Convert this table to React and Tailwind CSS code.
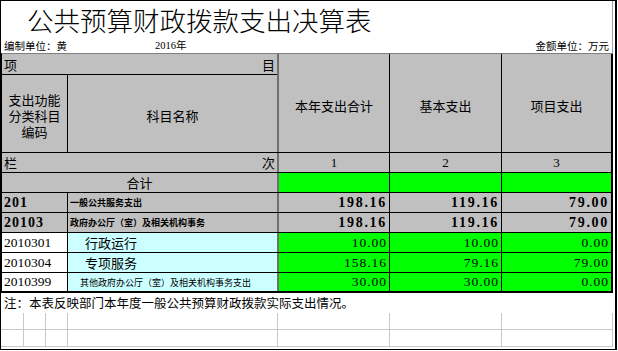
const NUM = "font-['Liberation_Serif','Noto_Sans_CJK_SC',serif]";

const rows = [
  { code: '201', name: '一般公共服务支出', vals: ['198.16', '119.16', '79.00'], sum: true },
  { code: '20103', name: '政府办公厅（室）及相关机构事务', vals: ['198.16', '119.16', '79.00'], sum: true },
  { code: '2010301', name: '行政运行', vals: ['10.00', '10.00', '0.00'] },
  { code: '2010304', name: '专项服务', vals: ['158.16', '79.16', '79.00'] },
  { code: '2010399', name: '其他政府办公厅（室）及相关机构事务支出', vals: ['30.00', '30.00', '0.00'], small: true, last: true },
];

const valCols = ['w-[111px] border-r border-black', 'w-[112px] border-r border-black', 'w-[111px] border-r-2 border-black'];

const gridCols = ['w-[23px]', 'w-[22px]', 'w-[22px]', 'w-[210px]', 'w-[112px]', 'w-[112px]', 'w-[111px]'];

function DataRow({ row }) {
  const bg = row.sum ? 'bg-[#c0c0c0]' : 'bg-[#00ff00]';
  return (
    <div className={`flex h-[20px] border-black ${row.last ? 'border-b-2' : 'border-b'}`}>
      {/* code */}
      <div
        className={`w-[66px] border-r border-black flex items-center pl-[2px] leading-none ${NUM} ${
          row.sum ? 'bg-[#c0c0c0] font-bold text-[14px] tracking-[1px]' : 'bg-white text-[13.5px]'
        }`}
      >
        {row.code}
      </div>
      {/* name */}
      <div
        className={`w-[211px] border-r-2 border-[#707070] flex items-center leading-none whitespace-nowrap ${
          row.sum
            ? 'bg-[#c0c0c0] font-bold text-[9px] pl-[2px]'
            : row.small
            ? 'bg-[#ccffff] text-[9px] pl-[12px]'
            : 'bg-[#ccffff] text-[13px] pl-[17px]'
        }`}
      >
        {row.name}
      </div>
      {row.vals.map((v, i) => (
        <div
          key={i}
          className={`${valCols[i]} ${bg} flex items-center justify-end pr-[2px] leading-none ${NUM} ${
            row.sum ? 'font-bold text-[14px] tracking-[1.7px]' : 'text-[13.5px] tracking-[1px]'
          }`}
        >
          {v}
        </div>
      ))}
    </div>
  );
}

export default function App() {
  return (
    <div className="w-[618px] h-[351px] bg-white text-black font-['Noto_Sans_CJK_SC',sans-serif]">
      <div className="w-[617px] h-[350px] border-l border-t border-b border-r-2 border-black overflow-hidden">
        {/* title block */}
        <div className="w-[612px] border-r border-[#a0a0a0]">
          <div className="h-[38px] flex items-center pl-[26px] text-[26.5px] font-light leading-none">
            公共预算财政拨款支出决算表
          </div>
          <div className="h-[14px] flex items-center text-[10.5px] leading-none">
            <span className="pl-[3px] w-[154px]">编制单位：黄</span>
            <span className={NUM}>2016年</span>
            <span className="ml-auto pr-[3px]">金额单位：万元</span>
          </div>
        </div>

        {/* table */}
        <div className="w-[612px] border-l border-t border-l-black border-t-[#808080]">
          {/* header */}
          <div className="flex h-[99px] border-b border-black bg-[#c0c0c0] text-[13px] leading-none">
            <div className="w-[277px] flex flex-col border-r-2 border-[#707070]">
              <div className="h-[21px] border-b border-black flex items-center justify-between px-[2px]">
                <span>项</span>
                <span>目</span>
              </div>
              <div className="flex-1 flex">
                <div className="w-[66px] border-r border-black flex flex-col items-center justify-center pt-[4px]">
                  <div className="h-[16px] flex items-center">支出功能</div>
                  <div className="h-[16px] flex items-center">分类科目</div>
                  <div className="h-[16px] flex items-center">编码</div>
                </div>
                <div className="flex-1 flex items-center justify-center pt-[4px]">科目名称</div>
              </div>
            </div>
            <div className={`${valCols[0]} flex items-center justify-center pt-[5px]`}>本年支出合计</div>
            <div className={`${valCols[1]} flex items-center justify-center pt-[5px]`}>基本支出</div>
            <div className={`${valCols[2]} flex items-center justify-center pt-[5px]`}>项目支出</div>
          </div>

          {/* 栏次 */}
          <div className="flex h-[20px] border-b border-black bg-[#c0c0c0] text-[13px] leading-none">
            <div className="w-[277px] border-r-2 border-[#707070] flex items-center justify-between px-[2px]">
              <span>栏</span>
              <span>次</span>
            </div>
            {['1', '2', '3'].map((n, i) => (
              <div key={n} className={`${valCols[i]} flex items-center justify-center ${NUM}`}>
                {n}
              </div>
            ))}
          </div>

          {/* 合计 */}
          <div className="flex h-[20px] border-b border-black text-[13px] leading-none">
            <div className="w-[277px] border-r-2 border-[#707070] bg-[#c0c0c0] flex items-center justify-center">
              合计
            </div>
            {valCols.map((c, i) => (
              <div key={i} className={`${c} bg-[#00ff00]`} />
            ))}
          </div>

          {rows.map((r) => (
            <DataRow key={r.code} row={r} />
          ))}
        </div>

        {/* note + empty sheet rows */}
        <div className="w-[612px]">
          <div className="h-[20px] flex items-center pl-[3px] text-[12.5px] leading-none whitespace-nowrap">
            注：本表反映部门本年度一般公共预算财政拨款实际支出情况。
          </div>
          {[0, 1].map((r) => (
            <div key={r} className="flex h-[17px] border-b border-[#c8c8c8]">
              {gridCols.map((w, i) => (
                <div key={i} className={`${w} border-r border-[#c8c8c8]`} />
              ))}
            </div>
          ))}
        </div>
      </div>
    </div>
  );
}
